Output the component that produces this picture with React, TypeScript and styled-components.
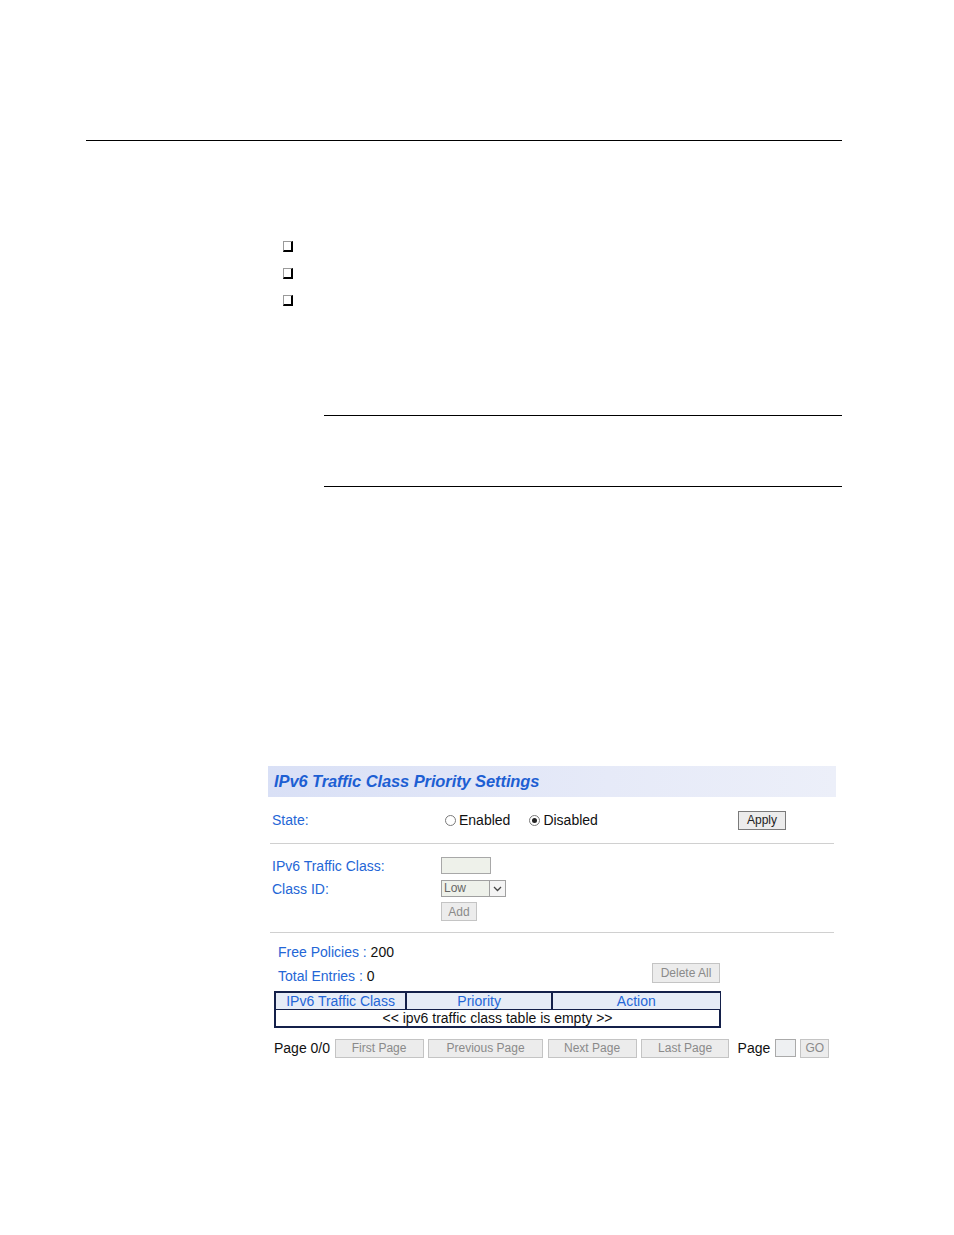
import styled, { createGlobalStyle } from "styled-components"

const GlobalStyle = createGlobalStyle`
  html, body {
    margin: 0;
    padding: 0;
    background: #ffffff;
  }
  body {
    font-family: "Liberation Sans", Arial, sans-serif;
  }
`

const Page = styled.div`
  width: 954px;
  min-height: 1235px;
  padding-top: 140px;
  box-sizing: border-box;
`

const TopRule = styled.div`
  margin-left: 86px;
  width: 756px;
  border-top: 1.5px solid #000;
`

const BoxList = styled.div`
  margin-top: 100px;
  padding-left: 283px;
  display: flex;
  flex-direction: column;
  gap: 16px;
`

const BoxGlyph = styled.span`
  display: block;
  width: 7px;
  height: 8px;
  border-left: 1px solid #9a9a9a;
  border-top: 1px solid #9a9a9a;
  border-right: 2px solid #000;
  border-bottom: 2px solid #000;
`

const NoteRules = styled.div`
  margin-top: 109px;
  margin-left: 324px;
  width: 518px;
  height: 70px;
  border-top: 1px solid #000;
  border-bottom: 1px solid #000;
`

const Panel = styled.div`
  margin-top: 279px;
  margin-left: 268px;
  width: 568px;
  font-size: 14px;
`

const PanelHeader = styled.div`
  height: 31px;
  display: flex;
  align-items: center;
  padding-left: 6px;
  background: linear-gradient(to right, #d9e0f6, #e6eaf8 60%, #eceff9);
`

const PanelTitle = styled.h2`
  margin: 0;
  font-size: 16.5px;
  font-weight: bold;
  font-style: italic;
  color: #1d5fd3;
  letter-spacing: -0.1px;
`

const Section = styled.div<{ $pad?: string }>`
  padding: ${(p) => p.$pad || "0"};
  border-bottom: 1px solid #d0d0d0;
  margin: 0 2px;
`

const Row = styled.div<{ $h?: number }>`
  display: flex;
  align-items: center;
  height: ${(p) => p.$h || 23}px;
`

const Label = styled.span<{ $w?: number; $indent?: number }>`
  color: #2466d6;
  width: ${(p) => (p.$w ? `${p.$w}px` : "auto")};
  padding-left: ${(p) => p.$indent || 2}px;
  flex-shrink: 0;
`

const Value = styled.span`
  color: #111;
`

const RadioOption = styled.label`
  display: flex;
  align-items: center;
  gap: 3px;
  color: #111;
  margin-right: 19px;
`

const RadioDot = styled.span<{ $checked?: boolean }>`
  width: 9px;
  height: 9px;
  border-radius: 50%;
  border: 1px solid #7a7a7a;
  background: #fff;
  position: relative;
  &::after {
    content: "";
    display: ${(p) => (p.$checked ? "block" : "none")};
    position: absolute;
    left: 2px;
    top: 2px;
    width: 5px;
    height: 5px;
    border-radius: 50%;
    background: #222;
  }
`

const Spacer = styled.span`
  flex: 1;
`

const Button = styled.button<{ $w: number; $dim?: boolean; $right?: number; $h?: number }>`
  width: ${(p) => p.$w}px;
  height: ${(p) => p.$h || 19}px;
  margin-right: ${(p) => p.$right || 0}px;
  padding: 0;
  font-family: "Liberation Sans", Arial, sans-serif;
  font-size: 12px;
  color: ${(p) => (p.$dim ? "#8a8a8a" : "#222")};
  background: #ececec;
  border: 1px solid ${(p) => (p.$dim ? "#c4c4c4" : "#7a7a7a")};
  border-radius: 0;
  flex-shrink: 0;
`

const TextBox = styled.span<{ $w: number }>`
  display: block;
  width: ${(p) => p.$w}px;
  height: 15px;
  border: 1px solid #a8a8a8;
  background: #eef1ea;
`

const SelectBox = styled.span`
  display: flex;
  width: 63px;
  height: 15px;
  border: 1px solid #a0a0a0;
  background: #eef1ea;
  font-size: 12px;
  color: #666;
`

const SelectText = styled.span`
  flex: 1;
  padding-left: 2px;
  line-height: 15px;
`

const SelectArrow = styled.span`
  width: 15px;
  border-left: 1px solid #a0a0a0;
  background: #f4f4f4;
  display: flex;
  align-items: center;
  justify-content: center;
`

const Stats = styled.div`
  padding-top: 7px;
`

const Table = styled.table`
  margin-top: 3px;
  margin-left: 6px;
  width: 447px;
  border-collapse: collapse;
  font-size: 14px;
`

const Th = styled.th<{ $w: number }>`
  width: ${(p) => p.$w}px;
  height: 16px;
  padding: 0;
  font-weight: normal;
  color: #2466d6;
  background: #e6ecf6;
  border: 2px solid #14204a;
  border-bottom-width: 1px;
  border-right-width: 1px;
`

const Td = styled.td`
  height: 16px;
  padding: 0;
  text-align: center;
  color: #111;
  font-size: 14px;
  border: 2px solid #14204a;
  border-top: 1px solid #14204a;
`

const Pager = styled.div`
  display: flex;
  align-items: center;
  height: 20px;
  margin-top: 10px;
  padding-left: 6px;
  gap: 4.5px;
`

const PagerText = styled.span<{ $left?: number }>`
  color: #111;
  font-size: 14px;
  margin-left: ${(p) => p.$left || 0}px;
`

const PageInput = styled.span`
  display: block;
  width: 19px;
  height: 16px;
  border: 1px solid #aaa;
  background: #eef0f2;
`

export default function App() {
  return (
    <>
      <GlobalStyle />
      <Page>
        <TopRule />
        <BoxList>
          <BoxGlyph />
          <BoxGlyph />
          <BoxGlyph />
        </BoxList>
        <NoteRules />

        <Panel>
          <PanelHeader>
            <PanelTitle>IPv6 Traffic Class Priority Settings</PanelTitle>
          </PanelHeader>

          <Section>
            <Row $h={46}>
              <Label $w={173}>State:</Label>
              <RadioOption>
                <RadioDot />
                Enabled
              </RadioOption>
              <RadioOption>
                <RadioDot $checked />
                Disabled
              </RadioOption>
              <Spacer />
              <Button $w={48} $right={48}>Apply</Button>
            </Row>
          </Section>

          <Section $pad="10px 0 9px">
            <Row>
              <Label $w={169}>IPv6 Traffic Class:</Label>
              <TextBox $w={48} />
            </Row>
            <Row>
              <Label $w={169}>Class ID:</Label>
              <SelectBox>
                <SelectText>Low</SelectText>
                <SelectArrow>
                  <svg width="9" height="6" viewBox="0 0 9 6">
                    <path d="M1 1 L4.5 4.5 L8 1" fill="none" stroke="#444" strokeWidth="1.3" />
                  </svg>
                </SelectArrow>
              </SelectBox>
            </Row>
            <Row>
              <Label $w={169}></Label>
              <Button $w={36} $dim>Add</Button>
            </Row>
          </Section>

          <Stats>
            <Row $h={24}>
              <Label $indent={10}>Free Policies : </Label>
              <Value>&nbsp;200</Value>
            </Row>
            <Row $h={24}>
              <Label $indent={10}>Total Entries : </Label>
              <Value>&nbsp;0</Value>
              <Spacer />
              <Button $w={68} $h={20} $dim $right={116} style={{ marginTop: -6 }}>Delete All</Button>
            </Row>
            <Table>
              <thead>
                <tr>
                  <Th $w={131}>IPv6 Traffic Class</Th>
                  <Th $w={146}>Priority</Th>
                  <Th $w={169}>Action</Th>
                </tr>
              </thead>
              <tbody>
                <tr>
                  <Td colSpan={3}>&lt;&lt; ipv6 traffic class table is empty &gt;&gt;</Td>
                </tr>
              </tbody>
            </Table>
            <Pager>
              <PagerText>Page 0/0</PagerText>
              <Button $w={89} $dim>First Page</Button>
              <Button $w={115} $dim>Previous Page</Button>
              <Button $w={89} $dim>Next Page</Button>
              <Button $w={88} $dim>Last Page</Button>
              <PagerText $left={4}>Page</PagerText>
              <PageInput />
              <Button $w={29} $dim>GO</Button>
            </Pager>
          </Stats>
        </Panel>
      </Page>
    </>
  )
}
